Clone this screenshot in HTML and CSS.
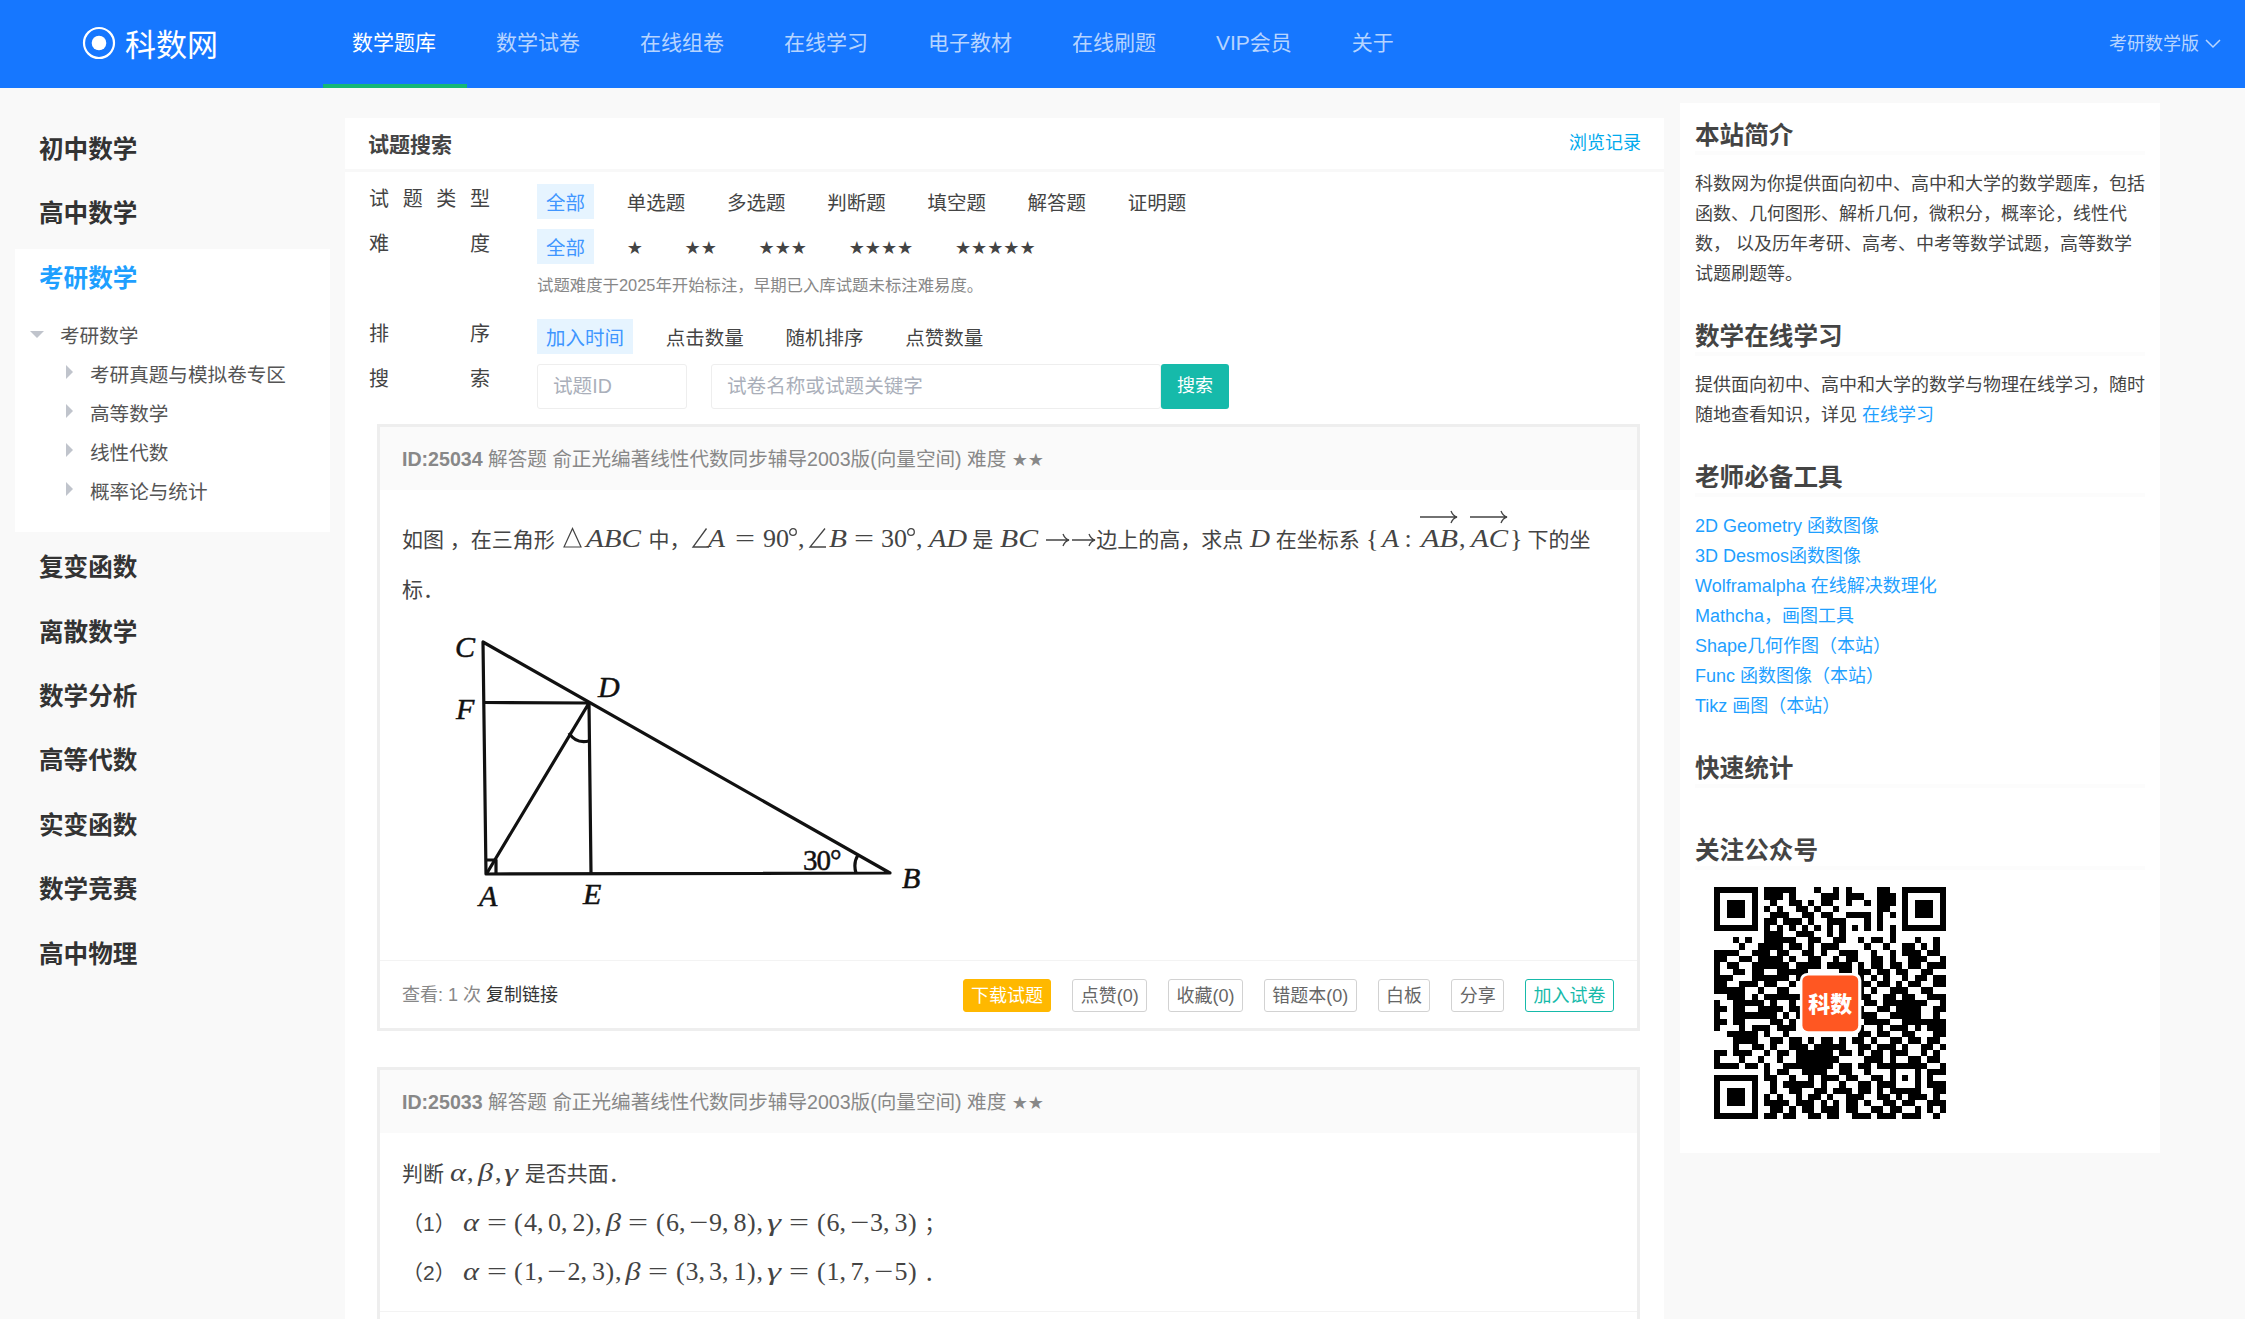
FILE: index.html
```html
<!DOCTYPE html>
<html lang="zh-CN">
<head>
<meta charset="utf-8">
<title>科数网</title>
<link rel="stylesheet" href="styles.css">
</head>
<body>
<header class="topbar">
  <div class="logo">
    <svg width="34" height="34" viewBox="0 0 34 34"><circle cx="17" cy="17" r="15" fill="none" stroke="#fff" stroke-width="2.2"/><circle cx="17" cy="17" r="7.3" fill="#fff"/></svg>
    <span>科数网</span>
  </div>
  <nav class="nav">
    <a class="on">数学题库</a><a>数学试卷</a><a>在线组卷</a><a>在线学习</a><a>电子教材</a><a>在线刷题</a><a>VIP会员</a><a>关于</a>
  </nav>
  <div class="edition">考研数学版
    <svg width="16" height="10" viewBox="0 0 16 10"><path d="M1 1l7 7 7-7" fill="none" stroke="#b9d6ff" stroke-width="1.5"/></svg>
  </div>
</header>
<div class="page">
  <aside class="side">
    <h3>初中数学</h3>
    <h3>高中数学</h3>
    <section class="open">
      <h3>考研数学</h3>
      <ul class="tree">
        <li class="root"><i class="down"></i>考研数学</li>
        <li><i class="right"></i>考研真题与模拟卷专区</li>
        <li><i class="right"></i>高等数学</li>
        <li><i class="right"></i>线性代数</li>
        <li><i class="right"></i>概率论与统计</li>
      </ul>
    </section>
    <h3>复变函数</h3>
    <h3>离散数学</h3>
    <h3>数学分析</h3>
    <h3>高等代数</h3>
    <h3>实变函数</h3>
    <h3>数学竞赛</h3>
    <h3>高中物理</h3>
  </aside>

  <main class="main">
    <div class="head"><b>试题搜索</b><a>浏览记录</a></div>
    <div class="filters">
      <div class="row"><div class="label"><span>试</span><span>题</span><span>类</span><span>型</span></div>
        <div class="chips"><a class="on">全部</a><a>单选题</a><a>多选题</a><a>判断题</a><a>填空题</a><a>解答题</a><a>证明题</a></div></div>
      <div class="row"><div class="label"><span>难</span><span>度</span></div>
        <div class="chips"><a class="on">全部</a><a class="star">★</a><a class="star">★★</a><a class="star">★★★</a><a class="star">★★★★</a><a class="star">★★★★★</a></div></div>
      <p class="hint">试题难度于2025年开始标注，早期已入库试题未标注难易度。</p>
      <div class="row"><div class="label"><span>排</span><span>序</span></div>
        <div class="chips"><a class="on">加入时间</a><a>点击数量</a><a>随机排序</a><a>点赞数量</a></div></div>
      <div class="row"><div class="label"><span>搜</span><span>索</span></div>
        <div class="search"><div class="input id">试题ID</div><div class="input key">试卷名称或试题关键字</div><div class="btn">搜索</div></div></div>
    </div>

    <article class="card">
      <div class="card-head"><b>ID:25034</b> 解答题 俞正光编著线性代数同步辅导2003版(向量空间) 难度 <span class="star">★★</span></div>
      <div class="card-body first">
        <p>如图 ，在三角形 <svg class="tex" width="82" height="20"><path d="M3 20L11.500 1.500L20 20Z" fill="none" stroke="#444" stroke-width="1.2"/><text y="20" x="25" class="i" textLength="55" lengthAdjust="spacingAndGlyphs">ABC</text></svg> 中，<svg class="tex" width="276" height="20"><path d="M15.500 1.500L2 20H18M134 1.500L119 20H135" fill="none" stroke="#444" stroke-width="1.3"/><text y="20" x="17" class="i" textLength="17" lengthAdjust="spacingAndGlyphs">A</text><text y="20" x="44" textLength="20" lengthAdjust="spacingAndGlyphs">=</text><text y="20" x="72">90</text><text y="20" x="107">,</text><text y="20" x="138" class="i" textLength="18" lengthAdjust="spacingAndGlyphs">B</text><text y="20" x="163" textLength="20" lengthAdjust="spacingAndGlyphs">=</text><text y="20" x="190">30</text><text y="20" x="225">,</text><text y="20" x="238" class="i" textLength="38" lengthAdjust="spacingAndGlyphs">AD</text><circle cx="102" cy="5" r="3.300" class="ring"/><circle cx="220" cy="5" r="3.300" class="ring"/></svg> 是 <svg class="tex" width="97" height="20"><text y="20" x="1" class="i" textLength="38" lengthAdjust="spacingAndGlyphs">BC</text><path d="M47 13H70M64 7q2 5 6 6q-4 1-6 6M73 13H96M90 7q2 5 6 6q-4 1-6 6" class="ring"/></svg>边上的高，求点 <svg class="tex" width="21" height="20"><text y="20" x="1" class="i" textLength="20" lengthAdjust="spacingAndGlyphs">D</text></svg> 在坐标系 <svg class="tex" width="156" height="20"><text y="20" x="0">{</text><text y="20" x="16" class="i" textLength="17" lengthAdjust="spacingAndGlyphs">A</text><text y="20" x="38.500">:</text><text y="20" x="55" class="i" textLength="37" lengthAdjust="spacingAndGlyphs">AB</text><text y="20" x="93">,</text><text y="20" x="105" class="i" textLength="37" lengthAdjust="spacingAndGlyphs">AC</text><text y="20" x="144">}</text><path d="M54-10H91M85-16q2 5 6 6q-4 1-6 6M104-10H141M135-16q2 5 6 6q-4 1-6 6" class="ring"/></svg> 下的坐标．</p>
        <svg class="figure" width="540" height="316" viewBox="402 614 540 316">
          <g fill="none" stroke="#111" stroke-width="3.200" stroke-linejoin="round">
            <path d="M483 642L486 874L890 873Z"/><path d="M484 702.500L589 703L591 873M589 703L487 873"/><path d="M569 733Q576 744 589 741M858 855Q853 863 856 873M486 860H496V873"/>
          </g>
          <g class="i">
            <text x="455" y="657">C</text><text x="598" y="697">D</text><text x="456" y="719">F</text><text x="479" y="906">A</text><text x="583" y="904">E</text><text x="902" y="888">B</text>
          </g>
          <text class="deg" x="803" y="870">30°</text>
        </svg>
      </div>
      <div class="card-foot"><span>查看: 1 次 <a>复制链接</a></span>
        <div class="acts"><a class="gold">下载试题</a><a>点赞(0)</a><a>收藏(0)</a><a>错题本(0)</a><a>白板</a><a>分享</a><a class="teal">加入试卷</a></div></div>
    </article>

    <article class="card">
      <div class="card-head"><b>ID:25033</b> 解答题 俞正光编著线性代数同步辅导2003版(向量空间) 难度 <span class="star">★★</span></div>
      <div class="card-body second">
        <p>判断 <svg class="tex" width="69" height="20"><text y="20" x="0" class="i" textLength="16" lengthAdjust="spacingAndGlyphs">α</text><text y="20" x="17">,</text><text y="20" x="28" class="i" textLength="15" lengthAdjust="spacingAndGlyphs">β</text><text y="20" x="45">,</text><text y="20" x="54" class="i" textLength="14" lengthAdjust="spacingAndGlyphs">γ</text></svg> 是否共面．</p>
        <p>（1） <svg class="tex" width="457" height="20"><text y="20" x="1" class="i" textLength="16" lengthAdjust="spacingAndGlyphs">α</text><text y="20" x="25" textLength="20" lengthAdjust="spacingAndGlyphs">=</text><text y="20" x="52 62 75 86 99 110.500 123.500 133">(4,0,2),</text><text y="20" x="144" class="i" textLength="15" lengthAdjust="spacingAndGlyphs">β</text><text y="20" x="166" textLength="20" lengthAdjust="spacingAndGlyphs">=</text><text y="20" x="194 204 217">(6,</text><text y="20" x="227.500" textLength="19" lengthAdjust="spacingAndGlyphs">−</text><text y="20" x="247 260 271.500 285 294.500">9,8),</text><text y="20" x="305" class="i" textLength="14" lengthAdjust="spacingAndGlyphs">γ</text><text y="20" x="327" textLength="20" lengthAdjust="spacingAndGlyphs">=</text><text y="20" x="355 364.500 377.500">(6,</text><text y="20" x="388.500" textLength="19" lengthAdjust="spacingAndGlyphs">−</text><text y="20" x="408 421 432.500 446">3,3)</text></svg> ；</p>
        <p>（2） <svg class="tex" width="457" height="20"><text y="20" x="1" class="i" textLength="16" lengthAdjust="spacingAndGlyphs">α</text><text y="20" x="25" textLength="20" lengthAdjust="spacingAndGlyphs">=</text><text y="20" x="52 62 75">(1,</text><text y="20" x="85.500" textLength="19" lengthAdjust="spacingAndGlyphs">−</text><text y="20" x="105.500 118.500 130 143.500 153">2,3),</text><text y="20" x="163.500" class="i" textLength="15" lengthAdjust="spacingAndGlyphs">β</text><text y="20" x="186" textLength="20" lengthAdjust="spacingAndGlyphs">=</text><text y="20" x="214 223.500 236.500 247 260 271.500 285 294.500">(3,3,1),</text><text y="20" x="305" class="i" textLength="14" lengthAdjust="spacingAndGlyphs">γ</text><text y="20" x="327" textLength="20" lengthAdjust="spacingAndGlyphs">=</text><text y="20" x="355 364.500 377.500 388.500 401.500">(1,7,</text><text y="20" x="412.500" textLength="19" lengthAdjust="spacingAndGlyphs">−</text><text y="20" x="432.500 446">5)</text></svg> ．</p>
      </div>
      <div class="card-foot"></div>
    </article>
  </main>

  <aside class="panel">
    <h2>本站简介</h2>
    <p>科数网为你提供面向初中、高中和大学的数学题库，包括函数、几何图形、解析几何，微积分，概率论，线性代数， 以及历年考研、高考、中考等数学试题，高等数学试题刷题等。</p>
    <h2>数学在线学习</h2>
    <p>提供面向初中、高中和大学的数学与物理在线学习，随时随地查看知识，详见 <a>在线学习</a></p>
    <h2>老师必备工具</h2>
    <p><a>2D Geometry 函数图像</a><br><a>3D Desmos函数图像</a><br><a>Wolframalpha 在线解决数理化</a><br><a>Mathcha，画图工具</a><br><a>Shape几何作图（本站）</a><br><a>Func 函数图像（本站）</a><br><a>Tikz 画图（本站）</a></p>
    <h2>快速统计</h2>
    <h2 class="follow">关注公众号</h2>
    <svg class="qr" width="232" height="232" viewBox="0 0 37 37">
      <path id="modules" shape-rendering="crispEdges"/>
      <rect x="13.700" y="13.700" width="9.800" height="9.800" rx="1.200" fill="#fff"/>
      <rect x="14.100" y="14.100" width="8.900" height="8.900" rx=".9" fill="#ff5722"/>
      <text x="18.550" y="19.900">科数</text>
    </svg>
  </aside>
</div>
<script src="qr.js"></script>
</body>
</html>
```
FILE: qr.js
```js
// Modules of the QR code, one string per row.
const rows = [
  "1111111011111000100101000011001111111",
  "1000001011101000011101110011101000001",
  "1011101001001101011001001011101011101",
  "1011101010100110100100000011001011101",
  "1011101001110011011001111010101011101",
  "1000001011011101001110001010001000001",
  "1111111010101010101010101010101111111",
  "0000000011100111001010000000100000000",
  "0001010011111001100110010110100010010",
  "0000100111101101011100001001001101010",
  "1111001110110011010011100100101110110",
  "1100110111101001100101100110100111001",
  "1011001111110111101111010110110110111",
  "1001101100111110000011011011011001100",
  "1110001111110100000000110101001011011",
  "1100111011001000000000011011010110011",
  "1111100100110000000000110100111001100",
  "0011101011111100000000011001101100111",
  "1001111101001000000000101101111111001",
  "1101100111101100000000010011011110011",
  "1001111111010100000000011100111110010",
  "1101100001101000000000001111001111111",
  "1000101110111000000000110010111010111",
  "0011111010010000000000011011001100011",
  "0001111001101101011010110100110110110",
  "0001001101001110111110011011101001101",
  "1101110010110111111011010110111001010",
  "1000100100100111111100001110100110110",
  "1111011010011111111011011011111111001",
  "0000000010110011110011001000100010111",
  "1111111011001001011101100110101010100",
  "1000001001011111010010011011100010111",
  "1011101001001100110111011010111110011",
  "1011101010100101101001110011010111010",
  "1011101011110111010101101001101100111",
  "1000001001101011011101100110110010101",
  "1111111011011001101100111011101110010"
];
let d = "";
rows.forEach((row, y) => [...row].forEach((v, x) => {
  if (v === "1") d += `M${x} ${y}h1v1h-1z`;
}));
document.getElementById("modules").setAttribute("d", d);
```
FILE: styles.css
```css
* { box-sizing: border-box; }
html, body { height: 1319px; overflow: hidden; }
body { margin: 0; background: #f9f9f9; color: #444; font-family: "Liberation Sans", "Noto Sans CJK SC", sans-serif; font-size: 19.6px; }
h2, h3, p, ul { margin: 0; padding: 0; }
ul { list-style: none; }
a { color: inherit; text-decoration: none; white-space: nowrap; }
svg { flex: none; }

.topbar { height: 88px; background: #1677ff; color: #fff; display: flex; }
.logo { width: 323px; padding-left: 82px; display: flex; align-items: center; gap: 9px; font-size: 31px; line-height: 86px; height: 86px; }
.logo span { padding-top: 5px; }
.nav { display: flex; flex: 1; font-size: 21px; }
.nav a { height: 88px; line-height: 85px; padding: 0 31px 0 29px; color: rgba(255,255,255,.7); }
.nav .on { color: #fff; border-bottom: 4px solid #16b777; }
.edition { font-size: 18px; line-height: 86px; padding-right: 24px; color: rgba(255,255,255,.7); display: flex; align-items: center; gap: 6px; height: 88px; }

.page { display: flex; align-items: flex-start; }
.side { width: 345px; padding: 32px 15px 0; }
.side h3 { font-size: 24.6px; height: 58px; line-height: 60px; color: #333; padding-left: 24px; margin-bottom: 6.4px; }
.open { background: #fff; height: 283px; margin-bottom: 6.4px; }
.open h3 { color: #1e9fff; margin-bottom: 10px; }
.tree li { height: 39px; line-height: 39px; display: flex; align-items: center; padding-left: 51px; color: #555; }
.tree .root { padding-left: 15px; }
.tree i { width: 0; height: 0; border: 7px solid transparent; }
.tree .down { border-top-color: #c0c4cc; border-bottom: 0; margin: -4px 16px 0 0; }
.tree .right { border-left-color: #c0c4cc; border-right: 0; margin: -7px 17px 0 0; }

.main { width: 1319px; height: 1201px; margin-top: 30px; background: #fff; overflow: hidden; }
.head { height: 54px; border-bottom: 3px solid #f8f8f8; padding: 0 23px 0 23px; display: flex; justify-content: space-between; line-height: 53px; font-size: 21px; }
.head a { color: #01aaed; font-size: 18px; line-height: 51px; }
.filters { padding: 12px 24px 0; height: 252px; }
.row { display: flex; height: 45px; }
.label { width: 121px; margin-right: 47px; display: flex; justify-content: space-between; font-size: 20px; line-height: 30px; }
.chips { display: flex; gap: 24px; }
.chips a { height: 35px; padding: 0 9px; line-height: 38px; }
.chips { font-size: 19.5px; }
.chips a:not(.on) { margin-left: -.3px; }
.chips .on { background: #e6f4ff; color: #4096ff; }
.star { font-family: "DejaVu Sans", sans-serif; font-size: 18px; }
.hint { padding-left: 168px; height: 45px; line-height: 22px; font-size: 16.4px; color: #888; }
.search { display: flex; }
.input { height: 45px; line-height: 42px; border: 1px solid #eee; border-radius: 3px; padding-left: 15px; color: #aaafba; white-space: nowrap; }
.id { width: 150px; margin-right: 24px; }
.key { width: 450px; }
.btn { width: 68px; height: 45px; background: #16baaa; color: #fff; border-radius: 3px; text-align: center; line-height: 44px; font-size: 18px; }

.card { margin: 0 24px 36px 32px; border: 3px solid #eee; }
.card-head { height: 63px; background: #fafafa; padding-left: 22px; line-height: 64px; color: #888; white-space: nowrap; }
.card-body { padding: 0 22px; font-size: 21px; color: #444; }
.card-body p { line-height: 49.500px; }
.first { height: 470px; padding-top: 25px; }
.second { height: 178px; padding-top: 16px; }
.figure { display: block; }
.tex { overflow: visible; vertical-align: baseline; font-family: "Liberation Serif", serif; font-size: 26px; fill: #444; }
.i { font-style: italic; }
.ring { fill: none; stroke: #444; stroke-width: 1.3; }
.figure text { font-family: "Liberation Serif", serif; font-size: 30px; fill: #111; stroke: #111; stroke-width: .5; }
.figure .deg { font-size: 29px; letter-spacing: -1px; }
.card-foot { height: 68px; border-top: 1px solid #f3f3f3; padding: 0 23px 0 22px; display: flex; justify-content: space-between; font-size: 18px; line-height: 68px; color: #888; }
.card-foot > span a { color: #333; }
.acts { display: flex; gap: 21px; padding-top: 18px; }
.acts a { height: 33px; line-height: 32px; border: 1px solid #d2d2d2; border-radius: 3px; padding: 0 7.400px; color: #666; }
.acts .gold { background: #ffb800; border-color: #ffb800; color: #fff; }
.acts .teal { border-color: #16baaa; color: #16baaa; }

.panel { width: 480px; height: 1050px; margin: 15px 0 0 16px; background: #fff; padding: 12px 15px 0; font-size: 18px; }
.panel h2 { font-size: 24.6px; line-height: 41px; height: 40px; border-bottom: 4px solid #fcfcfc; margin-bottom: 14px; white-space: nowrap; }
.panel p { line-height: 30px; margin-bottom: 27px; }
.panel a { color: #1e9fff; }
.panel .follow { margin: 42px 0 17px; }
.qr { display: block; margin-left: 19px; }
.qr text { font: 900 3.500px "Noto Sans CJK SC", sans-serif; fill: #fff; text-anchor: middle; }
```
